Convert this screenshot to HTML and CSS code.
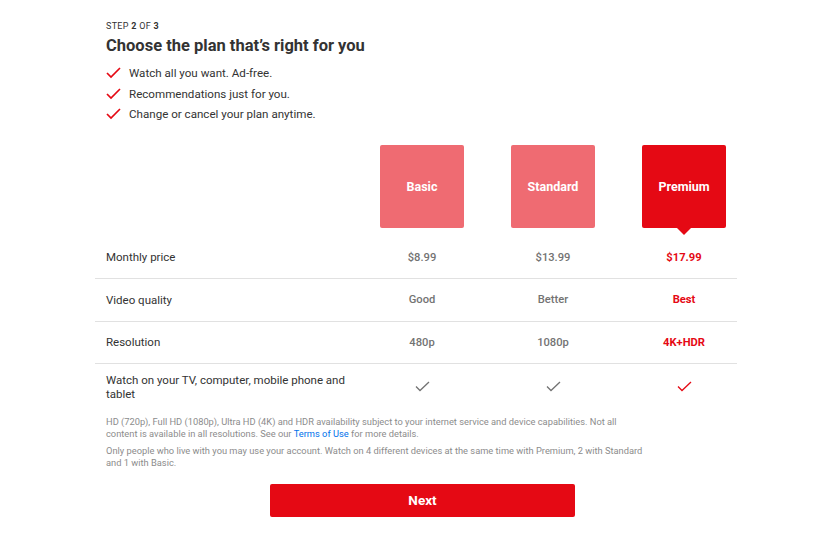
FILE: index.html
```html
<!DOCTYPE html>
<html>
<head>
<meta charset="utf-8">
<link rel="stylesheet" href="styles.css">
</head>
<body>
<div class="page">
  <div class="intro">
    <div class="step">STEP <b>2</b> OF <b>3</b></div>
    <h1 class="title">Choose the plan that’s right for you</h1>
    <ul class="perks">
      <li><svg class="perk-check" viewBox="0 0 15 12"><path d="M1 6 L5 10 L14 1"/></svg>Watch all you want. Ad-free.</li>
      <li><svg class="perk-check" viewBox="0 0 15 12"><path d="M1 6 L5 10 L14 1"/></svg>Recommendations just for you.</li>
      <li><svg class="perk-check" viewBox="0 0 15 12"><path d="M1 6 L5 10 L14 1"/></svg>Change or cancel your plan anytime.</li>
    </ul>
  </div>

  <div class="grid plans">
    <div></div>
    <div class="plan">Basic</div>
    <div class="plan">Standard</div>
    <div class="plan selected">Premium</div>
  </div>

  <div class="grid row">
    <div class="label">Monthly price</div>
    <div class="cell">$8.99</div>
    <div class="cell">$13.99</div>
    <div class="cell on">$17.99</div>
  </div>
  <div class="grid row">
    <div class="label">Video quality</div>
    <div class="cell">Good</div>
    <div class="cell">Better</div>
    <div class="cell on">Best</div>
  </div>
  <div class="grid row">
    <div class="label">Resolution</div>
    <div class="cell">480p</div>
    <div class="cell">1080p</div>
    <div class="cell on">4K+HDR</div>
  </div>
  <div class="grid row last">
    <div class="label">Watch on your TV, computer, mobile phone and tablet</div>
    <div class="cell"><svg class="tick" viewBox="0 0 15 11"><path d="M1 5.5 L5 9.5 L14 1"/></svg></div>
    <div class="cell"><svg class="tick" viewBox="0 0 15 11"><path d="M1 5.5 L5 9.5 L14 1"/></svg></div>
    <div class="cell on"><svg class="tick" viewBox="0 0 15 11"><path d="M1 5.5 L5 9.5 L14 1"/></svg></div>
  </div>

  <div class="notes">
    <p>HD (720p), Full HD (1080p), Ultra HD (4K) and HDR availability subject to your internet service and device capabilities. Not all content is available in all resolutions. See our <a href="#">Terms of Use</a> for more details.</p>
    <p>Only people who live with you may use your account. Watch on 4 different devices at the same time with Premium, 2 with Standard and 1 with Basic.</p>
  </div>

  <div class="actions">
    <button class="next">Next</button>
  </div>
</div>
</body>
</html>
```
FILE: styles.css
```css
html, body {
  margin: 0;
  padding: 0;
  background: #fff;
}
body {
  font-family: Roboto, "Liberation Sans", Arial, sans-serif;
  color: #333;
}
.page {
  width: 642px;
  margin-left: 95px;
  padding-top: 21px;
}
.intro {
  padding-left: 11px;
}
.step {
  font-size: 9px;
  letter-spacing: 0.3px;
  color: #333;
  line-height: 11px;
}
.step b {
  font-weight: 700;
}
.title {
  margin: 3px 0 6px;
  font-size: 16.5px;
  font-weight: 700;
  line-height: 22px;
  color: #333;
}
.perks {
  list-style: none;
  margin: 0;
  padding: 0;
}
.perks li {
  display: flex;
  align-items: center;
  font-size: 11.6px;
  line-height: 20.5px;
  color: #333;
}
.perk-check {
  width: 15px;
  height: 12px;
  margin-right: 8px;
  fill: none;
  stroke: #e50914;
  stroke-width: 1.7;
}
.grid {
  display: grid;
  grid-template-columns: 1fr 131px 131px 84px;
  padding: 0 11px;
  align-items: center;
}
.plans {
  margin-top: 20px;
  margin-bottom: 9px;
}
.plan {
  position: relative;
  width: 84px;
  height: 83px;
  display: flex;
  align-items: center;
  justify-content: center;
  background: #ef6b72;
  color: #fff;
  font-size: 12.5px;
  font-weight: 700;
  border-radius: 2px;
}
.plan.selected {
  background: #e50914;
}
.plan.selected::after {
  content: "";
  position: absolute;
  left: 50%;
  bottom: -7px;
  margin-left: -7px;
  border-left: 7px solid transparent;
  border-right: 7px solid transparent;
  border-top: 7px solid #e50914;
}
.row {
  min-height: 41.5px;
  border-bottom: 1px solid #e1e1e1;
  font-size: 11px;
}
.row.last {
  border-bottom: none;
  padding-top: 8.5px;
  padding-bottom: 8px;
  min-height: 28px;
}
.label {
  color: #333;
  font-size: 11.5px;
  line-height: 14px;
  padding-right: 20px;
}
.cell {
  width: 84px;
  text-align: center;
  color: #737373;
  font-size: 11.2px;
  font-weight: 500;
}
.cell.on {
  color: #e50914;
  font-weight: 700;
}
.tick {
  display: block;
  margin: 0 auto;
  width: 15px;
  height: 11px;
  fill: none;
  stroke: #737373;
  stroke-width: 1.3;
}
.cell.on .tick {
  stroke: #e50914;
}
.notes {
  padding: 0 11px;
  margin-top: 7px;
  max-width: 540px;
  font-size: 9.3px;
  line-height: 12px;
  color: #8c8c8c;
}
.notes p {
  margin: 0 0 5px;
}
.notes a {
  color: #0071eb;
  text-decoration: none;
}
.actions {
  padding-left: 175px;
  margin-top: 15px;
}
.next {
  display: block;
  width: 305px;
  height: 33px;
  border: none;
  border-radius: 2px;
  background: #e50914;
  color: #fff;
  font-family: inherit;
  font-size: 13.5px;
  font-weight: 700;
  cursor: pointer;
}
```
